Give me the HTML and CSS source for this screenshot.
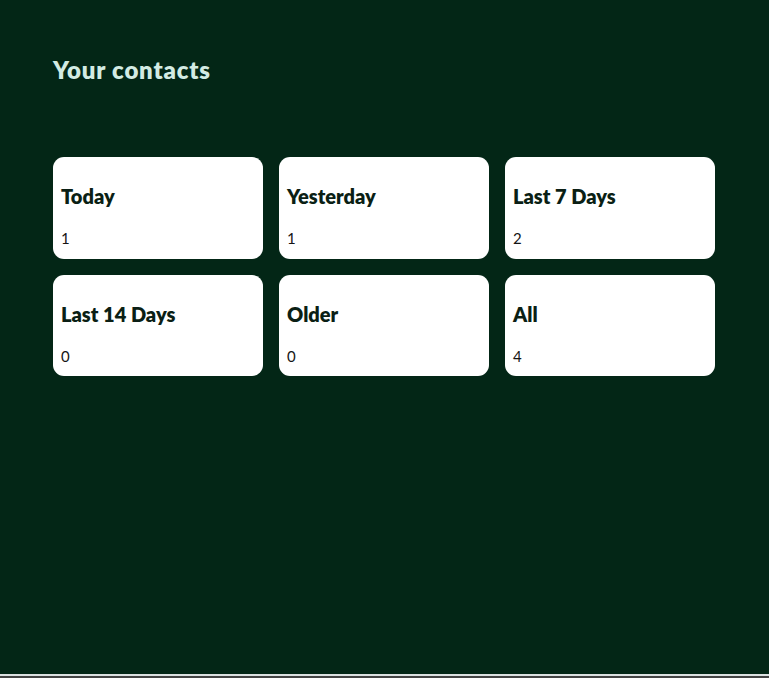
FILE: index.html
```html
<!DOCTYPE html>
<html lang="en">
<head>
<meta charset="utf-8">
<title>Your contacts</title>
<link rel="stylesheet" href="styles.css">
</head>
<body>
<main class="page">
  <h1 class="title">Your contacts</h1>
  <section class="grid">
    <div class="card"><h3 class="card-title">Today</h3><p class="card-count">1</p></div>
    <div class="card"><h3 class="card-title">Yesterday</h3><p class="card-count">1</p></div>
    <div class="card"><h3 class="card-title">Last 7 Days</h3><p class="card-count">2</p></div>
    <div class="card"><h3 class="card-title">Last 14 Days</h3><p class="card-count">0</p></div>
    <div class="card"><h3 class="card-title">Older</h3><p class="card-count">0</p></div>
    <div class="card"><h3 class="card-title">All</h3><p class="card-count">4</p></div>
  </section>
</main>
<div class="bottom-edge"></div>
</body>
</html>
```
FILE: styles.css
```css
html, body {
  margin: 0;
  padding: 0;
  background: #444444;
}
body {
  font-family: "Lato", "Noto Sans", sans-serif;
}
.page {
  box-sizing: border-box;
  height: 674px;
  background: #032616;
  padding: 55px 54px 0 53px;
}
.title {
  margin: 0;
  font-size: 24px;
  line-height: 30px;
  font-weight: 800;
  letter-spacing: 0.8px;
  color: #d3ebe3;
}
.grid {
  margin-top: 72px;
  display: grid;
  grid-template-columns: repeat(3, 210px);
  column-gap: 16px;
  row-gap: 16px;
}
.card {
  background: #ffffff;
  border-radius: 11px;
  padding: 27px 8px 10px;
  height: 101.5px;
  box-sizing: border-box;
}
.card-title {
  margin: 0;
  font-size: 20px;
  line-height: 24px;
  font-weight: 800;
  color: #0b1f15;
}
.card-count {
  margin: 21px 0 0;
  font-size: 15px;
  line-height: 18px;
  color: #151515;
}
.bottom-edge {
  height: 2px;
  background: #dde2e2;
}
```
